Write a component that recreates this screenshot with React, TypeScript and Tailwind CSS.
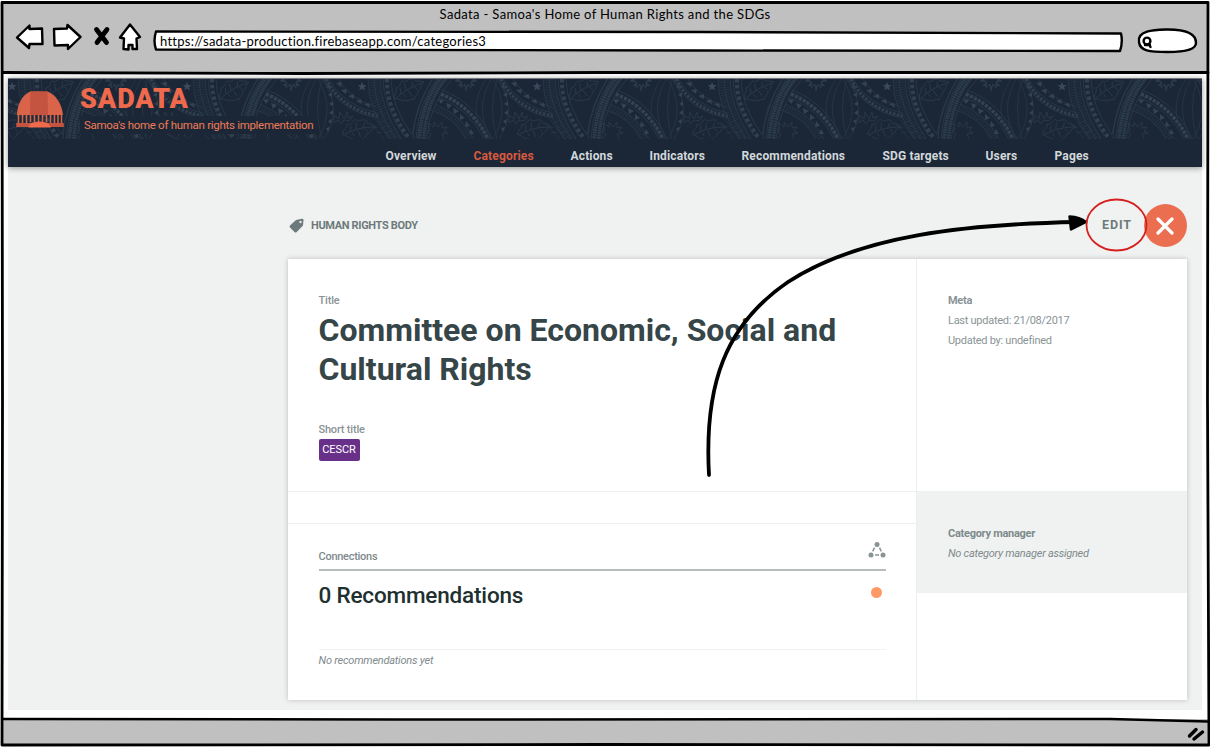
import React from "react";

const NAV = [
  { label: "Overview", w: "w-[88px]" },
  { label: "Categories", w: "w-[97px]" },
  { label: "Actions", w: "w-[79px]" },
  { label: "Indicators", w: "w-[92px]" },
  { label: "Recommendations", w: "w-[141px]" },
  { label: "SDG targets", w: "w-[103px]" },
  { label: "Users", w: "w-[69px]" },
  { label: "Pages", w: "w-[60px]" },
];

function Leaf({ x, y, r }: { x: number; y: number; r: number }) {
  return (
    <g transform={`translate(${x} ${y}) rotate(${r})`} fill="none" strokeWidth="0.8">
      <path d="M-17 1C-15-5-10-4-11-8C-6-6-5-11-1-11C0-7 4-11 9-8C8-4 14-4 17 0C11 1 12 6 7 5C7 9 1 8 0 11C-3 8-7 10-8 7C-12 7-12 3-17 1Z" />
      <path d="M-15 1Q0-3 15 0M-9 0L-7-6M-3-1L-1-8M4-1L7-6M-7 1L-6 5M-1 0L0 7M6 0L8 3" />
    </g>
  );
}

function Tile({ x }: { x: number }) {
  return (
    <g transform={`translate(${x} 0)`} stroke="#2c3b4a" fill="none" strokeWidth="0.8">
      <path d="M33 0Q14 26 13 60M36 0Q18 26 16 60M52 0Q31 22 26 60" />
      <path d="M44-2Q24 22 21 62" strokeWidth="8" stroke="#2e3d4a" strokeDasharray="1.8 0.6" />
      <path d="M44-2Q24 22 21 62" strokeWidth="0.8" stroke="#1b2837" />
      <path d="M42 11Q76 24 92 60M39 18Q69 30 84 60M35 25Q62 36 74 60M31 31Q54 38 66 60" />
      <path d="M41 15Q72 28 88 60" strokeWidth="3.6" stroke="#34434f" strokeDasharray="3.2 1.2" />
      <path d="M34 29Q57 38 70 60" strokeWidth="6" stroke="#253442" strokeDasharray="1 1.6" />
      <path d="M38 20l6 1-3 4zM46 24l6 2-4 4zM53 29l6 3-5 3zM60 35l5 4-5 2zM66 42l4 5-5 1zM71 50l3 5-5 0z" fill="#34434f" stroke="none" />
      <path d="M28 44l6 4 0-5 4 5 4-5 0 6 5-1-3 4 4 2-6 1 2 5M28 44l2 7-3 1 4 3-3 5" />
      <path d="M55 2l6 1-3-4M77 2l-6 1 3-4M58 7l4-4-1 6 4-4 1 7 2-7 3 4 0-6 4 4" fill="#2b3b49" />
      <path d="M86 0Q66 30 86 60M91 0Q74 30 91 60M97 0Q88 30 97 60M97 0Q119 30 99 60M93 0Q111 30 93 60" stroke="#283745" />
      <path d="M104 5l1 5-4-2zM107 13l0 5-4-2zM108 22l0 5-4-2zM108 31l0 5-4-2zM107 40l-1 5-3-3zM105 48l-2 5-2-4z" fill="#34434f" stroke="none" />
      <path d="M98 0Q114 32 153 39M103 0Q119 27 152 34M113 0Q125 20 151 28" />
      <path d="M101 0Q116 30 153 37" strokeWidth="3" stroke="#31404d" strokeDasharray="2.6 1.4" />
      <path d="M111 4l6-1-1 5zM116 11l6-1-1 5zM123 17l6-2 0 5zM131 22l5-2 1 5zM139 25l5-1 1 5z" fill="#34434f" stroke="none" />
      <path d="M137 3l1.3 3 3.2.2-2.4 2 .9 3.2-3-1.8-2.7 1.8.9-3.2-2.4-2 3-.2z" fill="#3b4a59" stroke="none" />
      <path d="M109 36l5 4 1-7 4 7 3-7 1 6 5-2-4 5-5-1-3 4-3-4-4 3z" />
      <path d="M149-2Q149 27 172 62" strokeWidth="10" stroke="#243341" strokeDasharray="1 1.5" />
      <path d="M143 0Q143 30 165 60M149 0Q149 28 171 60M155 0Q155 26 176 60M158 0Q158 26 179 57M166 0Q166 26 187 56" />
      <path d="M162 0Q161 28 183 58" strokeWidth="4" stroke="#31404d" strokeDasharray="3.5 2.4" />
      <path d="M187 55Q193 25 207 0" />
      <Leaf x={134} y={51} r={-12} />
      <Leaf x={184} y={11} r={-28} />
      <path d="M145 43l14 17M150 40l14 20M154 44l6-3M157 49l7-3M160 54l7-2M148 49l5-1M151 54l6-1" strokeWidth="0.6" />
    </g>
  );
}

function Fale() {
  return (
    <svg className="block h-[38px] w-[50px]" viewBox="0 0 50 38">
      <path d="M14.500 .5H31.500C40 4 46 13 47 24H.8C1.500 13 6 4 14.500 .5Z" fill="#d9644a" />
      <path d="M14.500 .5H31.500L32 24H14Z" fill="#c45340" />
      <path d="M2.500 24v9M6.500 24v9M10.500 24v9M14.500 24v7M18.500 24v7M22.500 24v7M26.500 24v7M30.500 24v7M34.500 24v9M38.500 24v9M42 24v9M45.500 24v9" stroke="#d9644a" strokeWidth="1.500" />
      <path d="M.2 32H47.800V36H.2Z" fill="#c45340" />
      <path d="M15 32Q23 29 32 32L35 36.500H12Z" fill="#f0694a" />
    </svg>
  );
}

export default function App() {
  return (
    <div className="relative flex h-[747px] w-[1210px] flex-col overflow-hidden bg-white font-['Roboto',sans-serif]">
      <header className="flex h-[73px] flex-col bg-[#c0c0c0] font-['Lato',sans-serif] text-black">
        <div className="flex h-[27px] items-center justify-center text-[13px] leading-[18px] tracking-[0.34px]">
          Sadata - Samoa's Home of Human Rights and the SDGs
        </div>
        <div className="flex h-[27px] items-center pl-[160px] text-[13px] leading-[18px]">
          <span className="relative z-20 whitespace-nowrap tracking-[0.25px]">https://sadata-production.firebaseapp.com/categories3</span>
        </div>
      </header>

      <div className="mx-[8px] mt-[5px] flex h-[632px] flex-col bg-[#f0f2f1]">
        <div className="relative z-10 flex h-[89px] flex-col border-t border-[#77777f] bg-[#1b2737] shadow-[0_1px_6px_rgba(0,0,0,0.4)]">
          <div className="relative h-[60px]">
            <svg className="absolute inset-0 h-[60px] w-full" viewBox="0 0 1194 60">
              {[-308, -133, 42, 217, 392, 567, 742, 917, 1092].map((x) => (
                <Tile key={x} x={x} />
              ))}
            </svg>
            <div className="relative flex pl-[8px]">
              <div className="pt-[12px]"><Fale /></div>
              <div className="flex flex-col items-start pl-[14px] pt-[5px]">
                <span className="text-[27px] font-black leading-[30px] tracking-[0.95px] text-[#ef6a4c]">SADATA</span>
                <span className="mt-[2px] whitespace-nowrap bg-[#1b2737] px-[4px] text-[11.500px] leading-[18px] tracking-[-0.29px] text-[#ef7b56]">Samoa's home of human rights implementation</span>
              </div>
            </div>
          </div>
          <nav className="flex h-[28px] items-center pl-[377.500px] pt-[5px] text-[12px] font-bold leading-[16px] tracking-[0.16px] text-[#d3d8da]">
            {NAV.map((n) => (
              <a key={n.label} className={`${n.w} shrink-0 whitespace-nowrap ${n.label === "Categories" ? "text-[#d9593f]" : ""}`}>{n.label}</a>
            ))}
          </nav>
        </div>

        <main className="ml-[280px] w-[899px] pt-[37px]">
          <div className="flex h-[43px] items-center justify-between">
            <div className="flex items-center gap-[7px] pl-px text-[11px] font-bold tracking-[-0.34px] text-[#6d7a7b]">
              <svg className="h-[15px] w-[15px]" viewBox="0 0 15 15">
                <path fillRule="evenodd" d="M7 2L13 .8Q14.600.6 14.500 2L14 7.500L7.500 14.200Q6.500 15 5.500 14L1 9.500Q0 8.500 1 7.500ZM11.500 2.800a1.200 1.200 0 1 0 .01 0Z" fill="#6d7a7b" />
              </svg>
              <span className="pt-[2px]">HUMAN RIGHTS BODY</span>
            </div>
            <div className="flex items-center">
              <span className="pr-[12px] text-[12.500px] font-bold tracking-[0.9px] text-[#6d7a7b]">EDIT</span>
              <div className="flex h-[43px] w-[43px] items-center justify-center rounded-full bg-[#eb6e51] pr-px">
                <svg className="h-[18px] w-[18px]" viewBox="0 0 18 18"><path d="M2 2L16 16M16 2L2 16" stroke="#fff" strokeWidth="3.200" strokeLinecap="round" /></svg>
              </div>
            </div>
          </div>

          <div className="mt-[12px] flex h-[441px] bg-white shadow-[0_0_5px_rgba(0,0,0,0.22)]">
            <div className="flex w-[629px] flex-col border-r border-[#edefee]">
              <section className="flex h-[233px] flex-col items-start border-b border-[#edefee] pl-[30.500px] pt-[34px]">
                <span className="text-[11px] font-medium leading-[16px] tracking-[-0.15px] text-[#899496]">Title</span>
                <h1 className="mt-[2px] text-[32px] font-bold leading-[39px] text-[#354548]"><span className="block whitespace-nowrap">Committee on Economic, Social and</span>Cultural Rights</h1>
                <span className="mt-[33px] text-[11px] font-medium leading-[16px] tracking-[-0.2px] text-[#899496]">Short title</span>
                <span className="mt-px flex h-[22px] w-[41px] items-center justify-center rounded-[2px] bg-[#683088] pt-px text-[11px] tracking-[-0.1px] text-white">CESCR</span>
              </section>
              <div className="h-[32px] border-b border-[#edefee]" />
              <section className="px-[30.500px]">
                <div className="flex h-[47px] items-end justify-between border-b-2 border-[#b6bdbd]">
                  <span className="pb-[4px] text-[11px] font-medium leading-[16px] tracking-[-0.27px] text-[#7e8a8c]">Connections</span>
                  <svg className="mb-[11px] h-[16px] w-[18px]" viewBox="0 0 18 16" fill="#899496" stroke="#899496">
                    <circle cx="9" cy="2.500" r="2.500" stroke="none" /><circle cx="3" cy="13" r="2.500" stroke="none" /><circle cx="15" cy="13" r="2.500" stroke="none" />
                    <path d="M6.500 5.700L4.700 9.300M11.500 5.700L13.300 9.300M7 13H11" strokeWidth="1.500" />
                  </svg>
                </div>
                <div className="flex h-[79px] items-start justify-between border-b border-[#f1f3f2] pt-[11px]">
                  <span className="text-[22.500px] font-medium leading-[27px] tracking-[-0.18px] text-[#20302f]">0 Recommendations</span>
                  <span className="mr-[4px] mt-[5px] h-[11px] w-[11px] rounded-full bg-[#ff9a68]" />
                </div>
                <div className="pt-[2px] text-[11px] italic leading-[17px] tracking-[-0.23px] text-[#7e8a8c]">No recommendations yet</div>
              </section>
            </div>
            <aside className="flex flex-1 flex-col">
              <section className="flex h-[232px] flex-col pl-[31px] pt-[32px] text-[11px] leading-[20px] tracking-[-0.27px] text-[#899496]">
                <b className="font-bold">Meta</b>
                <span>Last updated: 21/08/2017</span>
                <span>Updated by: undefined</span>
              </section>
              <section className="flex h-[102px] flex-col bg-[#f0f2f1] pl-[31px] pt-[33px] text-[11px] leading-[20px] tracking-[-0.27px] text-[#7e8a8c]">
                <b className="font-bold">Category manager</b>
                <i>No category manager assigned</i>
              </section>
            </aside>
          </div>
        </main>
      </div>
      <div className="h-[9px]" />
      <footer className="h-[28px] bg-[#c0c0c0]" />

      <svg className="pointer-events-none absolute inset-0 z-10 h-[747px] w-[1210px]" viewBox="0 0 1210 747" fill="none" stroke="#000" strokeLinejoin="round" strokeLinecap="round">
        <path d="M0 0H1210V747H0ZM3 2V744H1208V2Z" fill="#fff" fillRule="evenodd" stroke="none" />
        <path d="M2 2.500H1208L1207.500 400L1209 745L600 744.500L2 745L2.500 400Z" strokeWidth="2.800" />
        <path d="M3 72.500L300 73.500L600 72.500L1208 72.500" strokeWidth="2.800" />
        <path d="M3 719L400 719.500L1110 719L1208 721.500" strokeWidth="2.500" />
        <g fill="#fff" strokeWidth="2.400">
          <path d="M17 37.500L29.500 25.500V29L42 28.500L42.500 44H29.500L29 48Z" />
          <path d="M54 29L67 28.500L67.500 25L80.500 37L68 49V45L54.500 45.500Z" />
          <path d="M130 24.500L140 37L136.500 38.500L137 49H132.500V45H128.500V49.500L123.500 49L124 38.500L120 37.500Z" />
          <path d="M156 31.500L700 32L1121 33.500Q1123 42 1120 51L700 50.500L156 49.500Q153 41 156 31.500Z" />
          <path d="M1139 42C1137 30 1155 30 1168 29.500C1186 29.500 1196 33 1196 43C1196 50 1184 52 1168 52C1149 52 1140 51 1139 42Z" />
          <circle cx="1147" cy="41" r="3.400" />
          <path d="M1145 45H1150M1149 44L1150.500 47" />
        </g>
        <path d="M96.500 29.500L106.500 42.500M107 29.500L97 42.500" strokeWidth="4.800" />
        <path d="M1189.500 736L1196 729.500M1194 739L1202.500 732" strokeWidth="3.500" />
      </svg>
      <svg className="pointer-events-none absolute inset-0 z-20 h-[747px] w-[1210px]" viewBox="0 0 1210 747" fill="none" stroke="#000" strokeLinecap="round">
        <path d="M709 475C704 385 725 325 788 282C860 235 968 224 1078 222" strokeWidth="3.800" />
        <path d="M1069.500 216.500Q1080 217 1086 222L1071 229.500L1070 221Z" fill="#000" strokeWidth="2.400" strokeLinejoin="round" />
        <ellipse cx="1116.500" cy="225" rx="30" ry="25.500" stroke="#d6201f" strokeWidth="1.800" />
      </svg>
    </div>
  );
}
